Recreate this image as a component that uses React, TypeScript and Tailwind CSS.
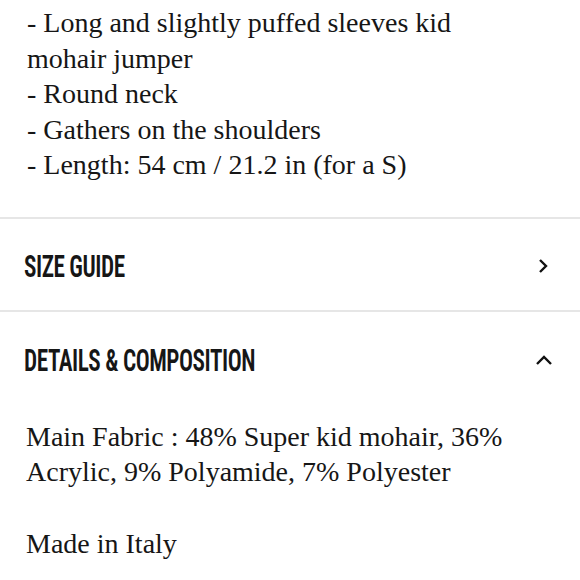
import React from "react";

const serif = { fontFamily: '"Liberation Serif", "DejaVu Serif", serif' };
const head = { fontFamily: '"Roboto Condensed", "Liberation Sans Narrow", "Liberation Sans", sans-serif' };

export default function App() {
  return (
    <div className="w-[580px] h-[580px] bg-white text-[#161616] overflow-hidden">
      <div className="w-[525px] pl-[27px] pt-[5px] pb-[34px] text-[28px] leading-[35.5px]" style={serif}>
        <p>- Long and slightly puffed sleeves kid mohair jumper</p>
        <p>- Round neck</p>
        <p>- Gathers on the shoulders</p>
        <p>- Length: 54 cm / 21.2 in (for a S)</p>
      </div>
      <div className="border-t-2 border-[#e6e6e6]" />
      <div className="flex items-center justify-between h-[91px] pt-[4px] pl-[24px] pr-[31px]">
        <span className="text-[31px] leading-none font-semibold tracking-[-0.02em] origin-left scale-x-[0.75]" style={head}>SIZE GUIDE</span>
        <svg width="12" height="16" viewBox="0 0 12 16" fill="none" stroke="#111" strokeWidth="2.4">
          <path d="M3 2l6 6-6 6" />
        </svg>
      </div>
      <div className="border-t-2 border-[#e6e6e6]" />
      <div className="flex items-center justify-between h-[96px] pt-[2px] pl-[24px] pr-[27px]">
        <span className="text-[31px] leading-none font-semibold tracking-[-0.02em] origin-left scale-x-[0.75]" style={head}>DETAILS &amp; COMPOSITION</span>
        <svg width="18" height="12" viewBox="0 0 18 12" fill="none" stroke="#111" strokeWidth="2.4">
          <path d="M2 9l7-7 7 7" />
        </svg>
      </div>
      <div className="w-[522px] pl-[26px] pt-[11px] text-[28px] leading-[35.5px]" style={serif}>
        <p>Main Fabric : 48% Super kid mohair, 36% Acrylic, 9% Polyamide, 7% Polyester</p>
        <p className="mt-[36px]">Made in Italy</p>
      </div>
    </div>
  );
}
